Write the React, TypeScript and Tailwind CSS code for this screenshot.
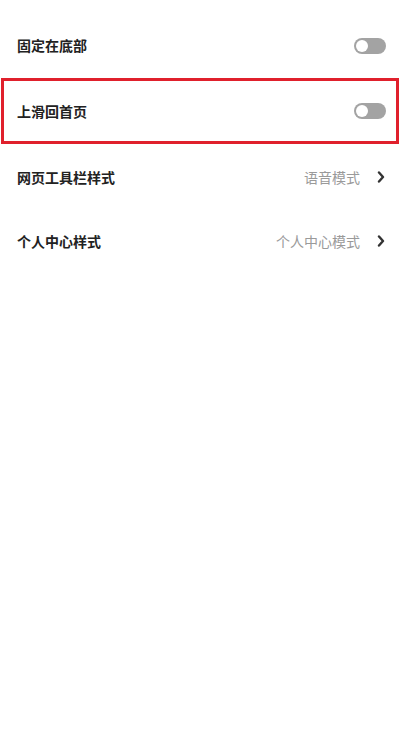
import type { ReactNode } from "react";

const font = { fontFamily: '"Noto Sans CJK SC", "Noto Sans", sans-serif' };

function Toggle() {
  return (
    <div className="flex h-[16px] w-[32px] items-center rounded-full bg-[#a3a3a3] px-[2px]">
      <div className="size-[12px] rounded-full bg-white" />
    </div>
  );
}

function Chevron() {
  return (
    <svg width="8" height="12" viewBox="0 0 8 12" className="ml-[17px]">
      <path d="M2 1.5 L6 6 L2 10.5" fill="none" stroke="#333" strokeWidth="2.4" strokeLinecap="round" strokeLinejoin="round" />
    </svg>
  );
}

function Row({ label, right, className }: { label: string; right: ReactNode; className: string }) {
  return (
    <div className={`flex items-center justify-between ${className}`}>
      <span className="text-[14px] font-bold text-[#222]">{label}</span>
      {right}
    </div>
  );
}

export default function App() {
  return (
    <div className="min-h-[734px] w-[400px] bg-white pt-[13px]" style={font}>
      <Row label="固定在底部" right={<Toggle />} className="h-[65px] pl-[17px] pr-[14px]" />
      <div className="mx-px border-[3px] border-[#e0202c]">
        <Row label="上滑回首页" right={<Toggle />} className="h-[60px] pl-[13px] pr-[10px]" />
      </div>
      <Row
        label="网页工具栏样式"
        right={
          <div className="flex items-center">
            <span className="text-[14px] text-[#9a9a9a]">语音模式</span>
            <Chevron />
          </div>
        }
        className="h-[66px] pl-[17px] pr-[15px]"
      />
      <Row
        label="个人中心样式"
        right={
          <div className="flex items-center">
            <span className="text-[14px] text-[#9a9a9a]">个人中心模式</span>
            <Chevron />
          </div>
        }
        className="h-[62px] pl-[17px] pr-[15px]"
      />
    </div>
  );
}
